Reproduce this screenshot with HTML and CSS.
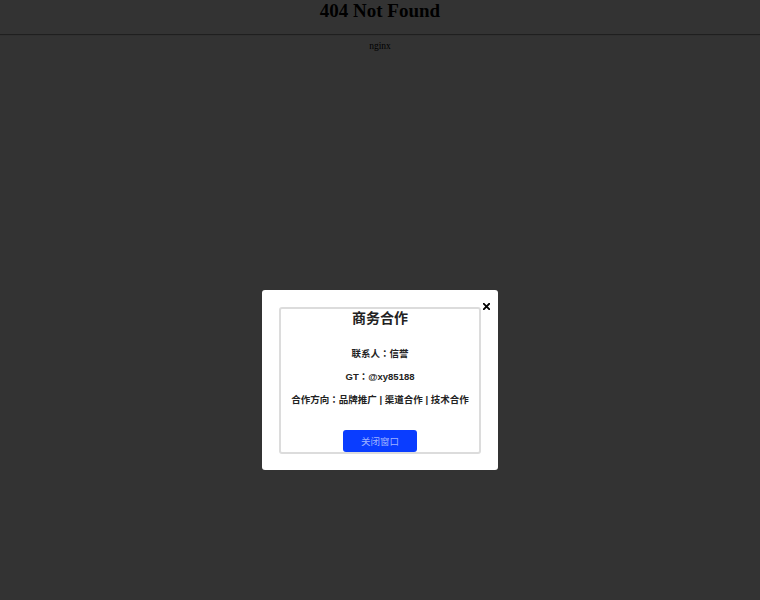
FILE: index.html
```html
<!DOCTYPE html>
<html>
<head>
<meta charset="utf-8">
<title>404 Not Found</title>
<link rel="stylesheet" href="styles.css">
</head>
<body>
<h1 class="title">404 Not Found</h1>
<hr class="rule">
<div class="server">nginx</div>

<div class="overlay">
  <div class="modal">
    <span class="close" aria-label="close">
      <svg width="7" height="7" viewBox="0 0 7 7"><path d="M0.8 0.8 L6.2 6.2 M6.2 0.8 L0.8 6.2" stroke="#000" stroke-width="1.9" stroke-linecap="square"/></svg>
    </span>
    <div class="inner">
      <h3 class="heading">商务合作</h3>
      <p class="line">联系人<span class="colon">：</span>信誉</p>
      <p class="line">GT<span class="colon">：</span>@xy85188</p>
      <p class="line">合作方向<span class="colon">：</span>品牌推广 | 渠道合作 | 技术合作</p>
      <button class="btn">关闭窗口</button>
    </div>
  </div>
</div>
</body>
</html>
```

FILE: styles.css
```css
html, body {
  margin: 0;
  padding: 0;
  background: #fff;
  font-family: "Liberation Serif", "Times New Roman", serif;
}
.title {
  margin: 0 0 12.7px;
  font-size: 19px;
  font-weight: bold;
  text-align: center;
  line-height: 21.8px;
}
.rule {
  margin: 0 0 4.5px;
  border: none;
  border-top: 1px solid #9a9a9a;
  border-bottom: 1px solid #eeeeee;
  height: 0;
}
.server {
  text-align: center;
  font-size: 9.5px;
  line-height: 11px;
}
.overlay {
  position: fixed;
  inset: 0;
  background: rgba(0, 0, 0, 0.8);
  display: flex;
  justify-content: center;
  align-items: flex-start;
  padding-top: 290px;
}
.modal {
  position: relative;
  width: 236px;
  height: 180px;
  box-sizing: border-box;
  background: #fff;
  border-radius: 3px;
  padding: 17px;
}
.close {
  position: absolute;
  left: 220.5px;
  top: 12.5px;
  width: 7px;
  height: 7px;
  display: block;
  line-height: 0;
}
.inner {
  box-sizing: border-box;
  height: 147px;
  border: 2px solid #dcdcdc;
  border-radius: 3px;
  padding-top: 0.5px;
  display: flex;
  flex-direction: column;
  align-items: center;
  font-family: "Liberation Sans", Arial, "Noto Sans CJK SC", sans-serif;
  color: #222;
}
.heading {
  margin: 0;
  font-size: 14px;
  line-height: 16px;
  font-weight: bold;
}
.line {
  margin: 0 0 10px;
  font-size: 9.5px;
  line-height: 13px;
  font-weight: bold;
}
.colon {
  font-family: "Noto Sans CJK JP", sans-serif;
}
.heading + .line {
  margin-top: 21.5px;
}
.btn {
  margin-top: 13.5px;
  width: 74px;
  height: 23px;
  border: none;
  border-radius: 3px;
  background: #0a3dff;
  color: #9fb2ff;
  font-family: "Liberation Sans", Arial, "Noto Sans CJK SC", sans-serif;
  font-size: 9.5px;
  padding: 0;
}
```
